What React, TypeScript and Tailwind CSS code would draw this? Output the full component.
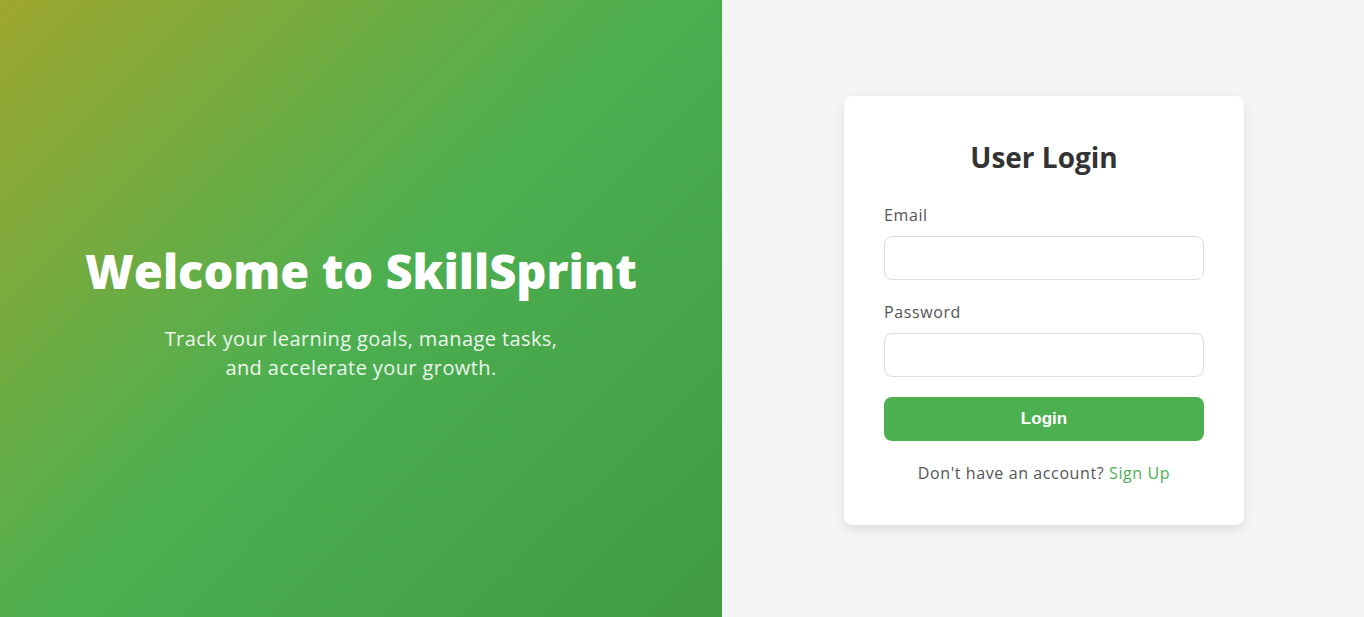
export default function App() {
  return (
    <div className="flex h-[617px] w-full font-['Open_Sans',sans-serif]">
      <div className="flex w-[722px] flex-col items-center justify-center bg-[linear-gradient(135deg,#9ea72f_0%,#4caf50_50%,#409b43_100%)] px-10 pt-[8px] text-center text-white">
        <h1 className="text-[47px] font-extrabold leading-[1.2]">Welcome to SkillSprint</h1>
        <p className="mt-[24px] text-[20px] leading-[29px] tracking-[0.4px] text-white/90">
          Track your learning goals, manage tasks,
          <br />
          and accelerate your growth.
        </p>
      </div>
      <div className="flex flex-1 items-center justify-center bg-[#f4f5f5] pl-[2px] pt-[4px]">
        <div className="w-[400px] rounded-lg bg-white px-10 pb-[41px] pt-10 shadow-[0_4px_12px_rgba(0,0,0,0.1)]">
          <h2 className="mb-[26px] text-center text-[28px] font-bold leading-[42px] text-[#333]">User Login</h2>
          <label className="mb-[10px] block text-[16px] leading-[22px] tracking-[0.6px] text-[#555]">Email</label>
          <input type="email" className="mb-[21px] block h-[44px] w-full rounded-lg border border-[#ddd] px-3 outline-none" />
          <label className="mb-[10px] block text-[16px] leading-[22px] tracking-[0.6px] text-[#555]">Password</label>
          <input type="password" className="mb-[20px] block h-[44px] w-full rounded-lg border border-[#ddd] px-3 outline-none" />
          <button className="block h-[44px] w-full rounded-lg bg-[#4caf50] font-['Liberation_Sans',Arial,sans-serif] text-[17px] font-bold text-white">
            Login
          </button>
          <p className="mt-[21px] text-center text-[16px] leading-[22px] tracking-[0.6px] text-[#555]">
            Don't have an account? <a className="text-[#4caf50]">Sign Up</a>
          </p>
        </div>
      </div>
    </div>
  );
}
